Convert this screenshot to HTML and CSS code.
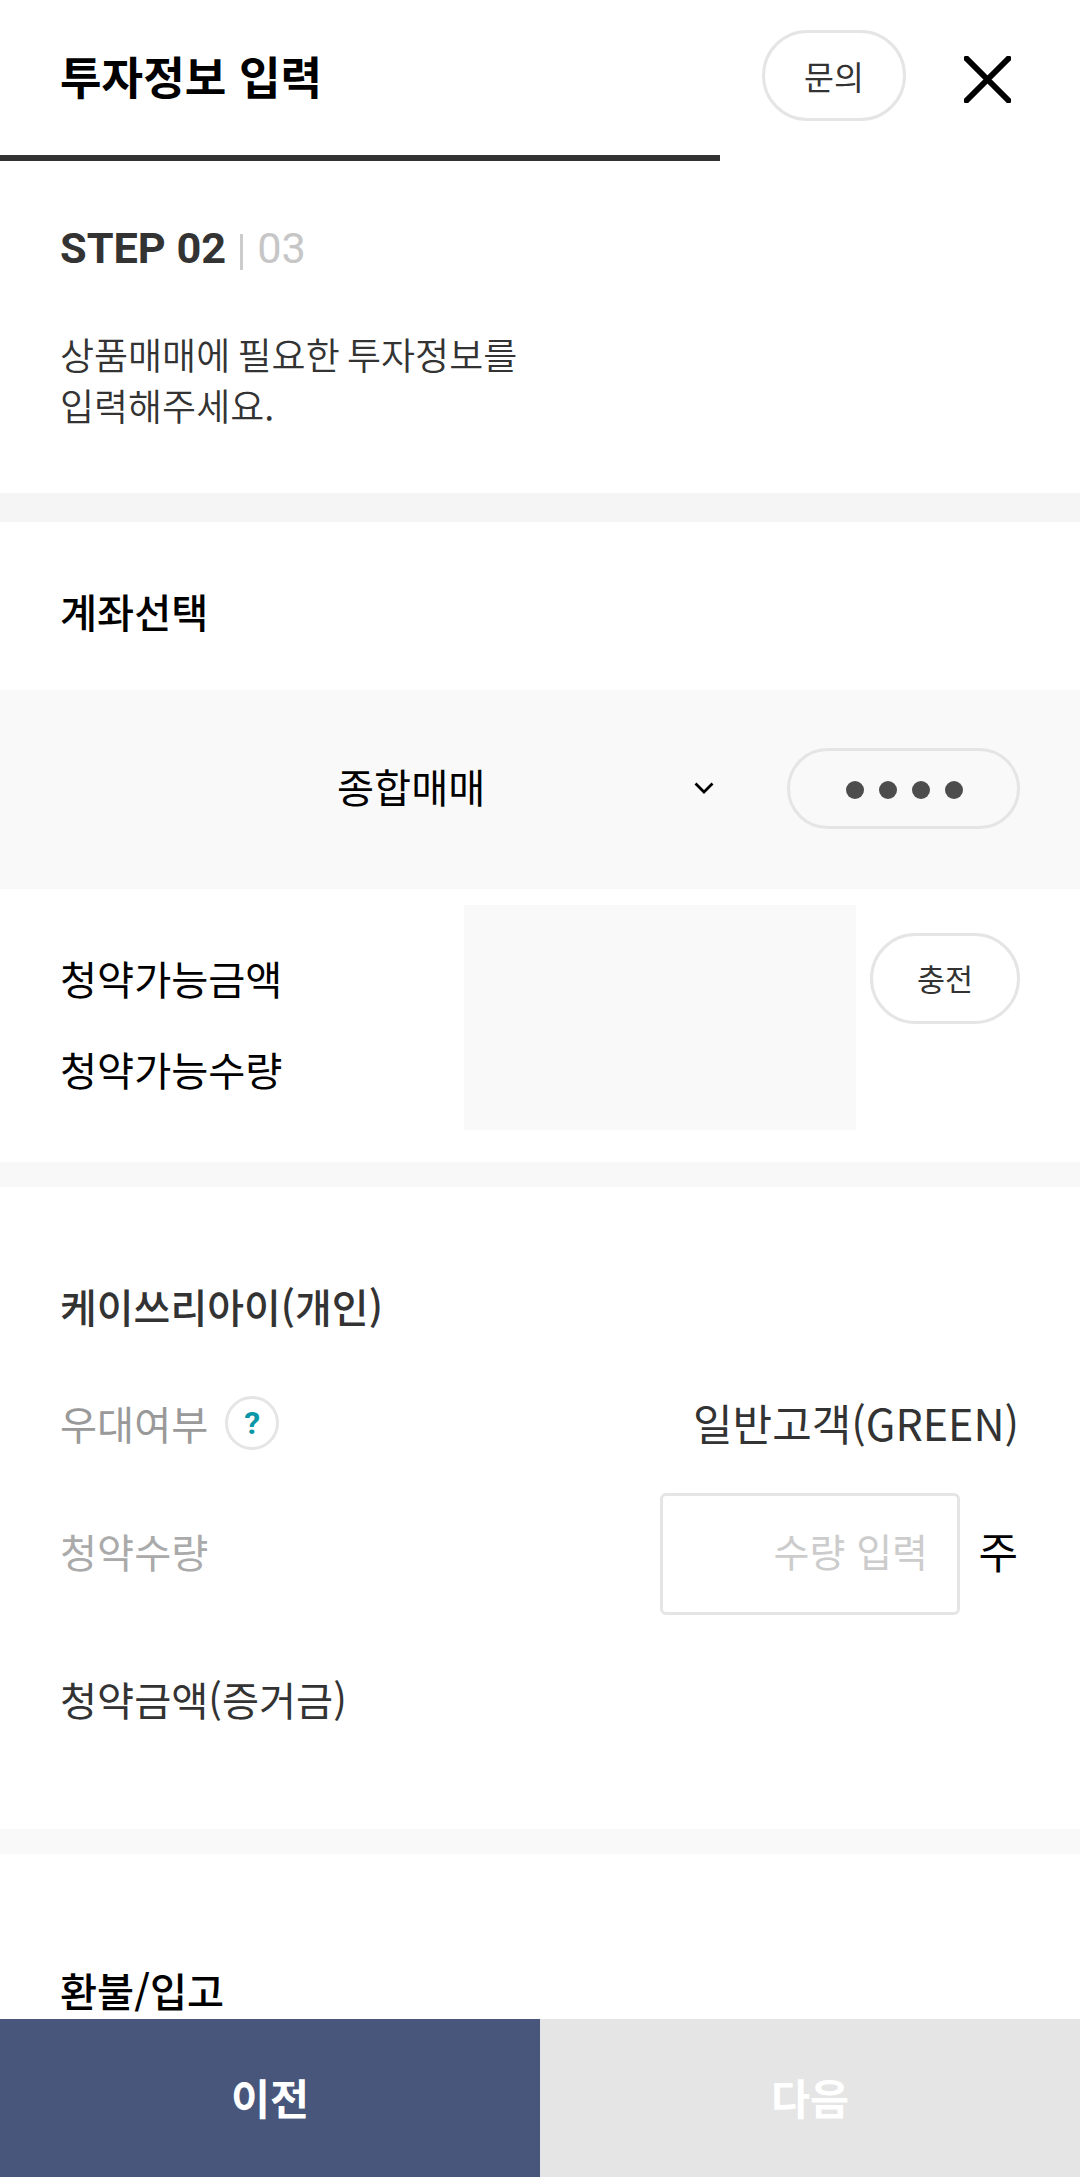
FILE: index.html
```html
<!DOCTYPE html>
<html lang="ko">
<head>
<meta charset="utf-8">
<title>투자정보 입력</title>
<link rel="stylesheet" href="styles.css">
</head>
<body>
<div class="page">
  <main class="content">
    <header class="top">
      <h1 class="title">투자정보 입력</h1>
      <button class="pill pill-ask">문의</button>
      <svg class="close" width="47" height="47" viewBox="0 0 47 47"><path d="M2.5 2.5 44.5 44.5M44.5 2.5 2.5 44.5" stroke="#000" stroke-width="6" stroke-linecap="round" fill="none"/></svg>
    </header>
    <div class="progress"><div class="progress-fill"></div></div>
    <section class="intro">
      <div class="step"><b>STEP 02</b><i class="step-sep"></i><span>03</span></div>
      <p class="lead">상품매매에 필요한 투자정보를<br>입력해주세요.</p>
    </section>
    <div class="gap-intro"></div>
    <h2 class="head head-account">계좌선택</h2>
    <div class="account">
      <span class="account-name">종합매매</span>
      <svg class="chev" width="20" height="12" viewBox="0 0 20 12"><path d="M1.5 1.5 10 10 18.5 1.5" stroke="#000" stroke-width="2.8" fill="none"/></svg>
      <div class="pw"><i></i><i></i><i></i><i></i></div>
    </div>
    <div class="avail">
      <div class="avail-labels"><div>청약가능금액</div><div>청약가능수량</div></div>
      <div class="avail-box"></div>
      <button class="pill pill-charge">충전</button>
    </div>
    <div class="gap-avail"></div>
    <section class="order">
      <h2 class="order-title">케이쓰리아이(개인)</h2>
      <div class="row row-grade">
        <span class="muted">우대여부</span>
        <span class="help">?</span>
        <span class="grade">일반고객(GREEN)</span>
      </div>
      <div class="row row-qty">
        <span class="muted muted-2">청약수량</span>
        <div class="qty">수량 입력</div>
        <span class="unit">주</span>
      </div>
      <div class="deposit">청약금액(증거금)</div>
    </section>
    <div class="gap-order"></div>
    <h2 class="head head-refund">환불/입고</h2>
  </main>
  <footer class="foot">
    <button class="btn btn-prev">이전</button>
    <button class="btn btn-next">다음</button>
  </footer>
</div>
</body>
</html>
```

FILE: styles.css
```css
* { box-sizing: border-box; }
html, body { margin: 0; padding: 0; background: #fff; }
body { font-family: "Noto Sans CJK KR", "Noto Sans", sans-serif; color: #000; }
button { font-family: inherit; background: #fff; margin: 0; padding: 0; cursor: pointer; }
h1, h2, p { margin: 0; }
.page { width: 1080px; height: 2177px; display: flex; flex-direction: column; overflow: hidden; }
.content { flex: 1; overflow: hidden; min-height: 0; }
.foot { height: 158px; display: flex; flex: none; }

.top { height: 155px; display: flex; align-items: flex-start; padding: 30px 69px 0 60px; }
.title { font-size: 45.2px; font-weight: 700; line-height: 92px; flex: 1; }
.pill { border: 3px solid #e5e5e5; border-radius: 46px; color: #333; }
.pill-ask { width: 144px; height: 91px; font-size: 32.5px; margin-right: 58px; }
.close { margin-top: 26px; flex: none; }
.progress { height: 6px; background: #fff; }
.progress-fill { width: 720px; height: 6px; background: #333; }

.intro { height: 332px; padding: 61px 60px 0; }
.step { font-family: Roboto, sans-serif; font-size: 43.3px; line-height: 54px; display: flex; align-items: center; color: #c6c6c6; }
.step b { color: #333; font-weight: 700; }
.step-sep { width: 3px; height: 36px; background: #ccc; margin: 6px 14px 0 14px; }
.lead { font-size: 37px; font-weight: 350; word-spacing: -3px; line-height: 51px; color: #333; margin-top: 53px; }

.gap-intro { height: 29px; background: #f5f5f5; }
.gap-avail { height: 25px; background: #f8f8f8; }
.gap-order { height: 25px; background: #f9f9f9; }

.head { font-size: 40.3px; font-weight: 500; color: #000; }
.head-account { height: 168px; line-height: 60px; padding: 59px 60px 0; }
.head-refund { line-height: 48px; padding: 112px 60px 0; }

.account { height: 199px; background: #f9f9f9; display: flex; align-items: center; padding: 0 60px 0 337px; }
.account-name { font-size: 40.3px; width: 357px; margin-top: -9px; font-weight: 400; }
.chev { flex: none; margin-right: 73px; margin-top: -4px; }
.pw { flex: none; width: 233px; height: 81px; margin-top: -3px; border: 3px solid #e5e5e5; border-radius: 41px; display: flex; align-items: center; justify-content: center; gap: 15px; padding: 4px 0 0 2px; }
.pw i { width: 18px; height: 18px; border-radius: 50%; background: #4d4d4d; }

.avail { height: 273px; display: flex; padding: 16px 60px 0 60px; align-items: flex-start; }
.avail-labels { width: 404px; padding-top: 45px; font-size: 40.3px; line-height: 56px; }
.avail-labels div + div { margin-top: 35px; }
.avail-box { width: 392px; height: 225px; background: #f9f9f9; margin-right: 14px; }
.pill-charge { width: 150px; height: 91px; font-size: 30.5px; margin-top: 28px; padding-bottom: 2px; }

.order { height: 642px; padding: 90px 62px 0 60px; }
.order-title { font-size: 40px; font-weight: 500; color: #333; line-height: 58px; }
.row { display: flex; align-items: center; }
.row-grade { height: 56px; margin-top: 59px; }
.muted { font-size: 40.3px; color: #999; }
.muted-2 { color: #aaa; margin-top: -8px; }
.help { width: 54px; height: 54px; border: 3px solid #e5e5e5; border-radius: 50%; margin-left: 17px; margin-top: 2px; display: flex; align-items: center; justify-content: center; font-family: Roboto, sans-serif; font-size: 32px; font-weight: 700; color: #0a97a8; flex: none; }
.grade { margin-left: auto; margin-right: -1px; font-size: 43px; color: #333; margin-top: -1px; }
.row-qty { margin-top: 43px; }
.qty { margin-left: auto; margin-right: 2px; width: 300px; height: 122px; border: 3px solid #e5e5e5; border-radius: 6px; display: flex; align-items: center; justify-content: flex-end; padding: 0 29px 8px 0; font-size: 39px; color: #ccc; }
.unit { font-size: 43px; width: 56px; text-align: right; color: #000; margin-top: -8px; }
.deposit { font-size: 40.3px; color: #333; line-height: 58px; margin-top: 55px; }

.btn { flex: 1; border: 0; font-size: 42.5px; font-weight: 700; color: #fff; padding-bottom: 4px; }
.btn-prev { background: #47567a; }
.btn-next { background: #e5e5e5; }
```
